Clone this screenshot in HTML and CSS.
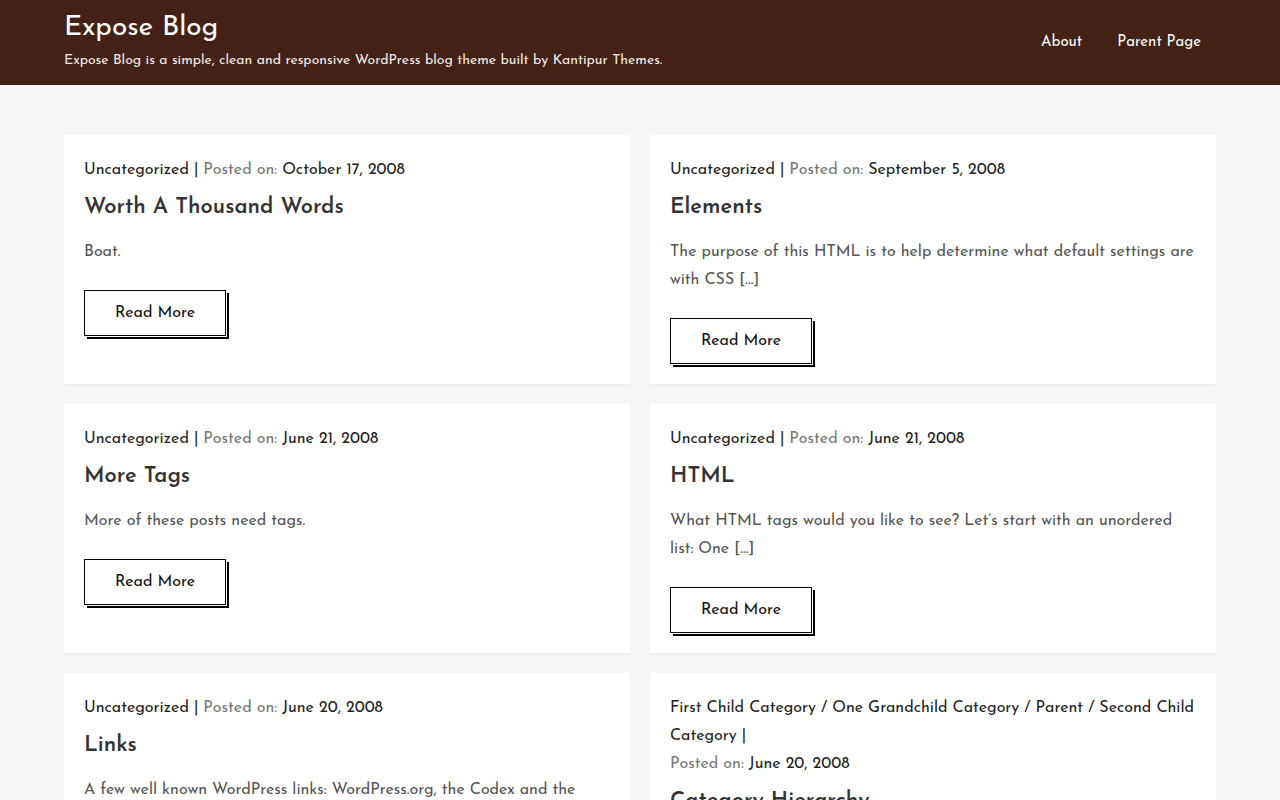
FILE: index.html
```html
<!DOCTYPE html>
<html lang="en">
<head>
  <meta charset="UTF-8">
  <title>Expose Blog</title>
  <meta name="viewport" content="width=device-width, initial-scale=1.0">
  <link rel="stylesheet" href="styles.css">
</head>
<body>
  <header class="site-header">
    <div class="container header-inner">
      <div class="branding">
        <a class="site-title" href="#">Expose Blog</a>
        <p class="site-description">Expose Blog is a simple, clean and responsive WordPress blog theme built by Kantipur Themes.</p>
      </div>
      <nav class="main-nav">
        <a href="#">About</a>
        <a href="#">Parent Page</a>
      </nav>
    </div>
  </header>

  <main class="container posts">
    <article class="post">
      <div class="entry-meta">
        <span class="cats"><a href="#">Uncategorized</a> |</span>
        <span class="posted">Posted on: <a href="#">October 17, 2008</a></span>
      </div>
      <h2 class="entry-title"><a href="#">Worth A Thousand Words</a></h2>
      <p class="excerpt">Boat.</p>
      <a class="read-more" href="#">Read More</a>
    </article>

    <article class="post">
      <div class="entry-meta">
        <span class="cats"><a href="#">Uncategorized</a> |</span>
        <span class="posted">Posted on: <a href="#">September 5, 2008</a></span>
      </div>
      <h2 class="entry-title"><a href="#">Elements</a></h2>
      <p class="excerpt">The purpose of this HTML is to help determine what default settings are with CSS […]</p>
      <a class="read-more" href="#">Read More</a>
    </article>

    <article class="post">
      <div class="entry-meta">
        <span class="cats"><a href="#">Uncategorized</a> |</span>
        <span class="posted">Posted on: <a href="#">June 21, 2008</a></span>
      </div>
      <h2 class="entry-title"><a href="#">More Tags</a></h2>
      <p class="excerpt">More of these posts need tags.</p>
      <a class="read-more" href="#">Read More</a>
    </article>

    <article class="post">
      <div class="entry-meta">
        <span class="cats"><a href="#">Uncategorized</a> |</span>
        <span class="posted">Posted on: <a href="#">June 21, 2008</a></span>
      </div>
      <h2 class="entry-title"><a href="#">HTML</a></h2>
      <p class="excerpt">What HTML tags would you like to see? Let’s start with an unordered list: One […]</p>
      <a class="read-more" href="#">Read More</a>
    </article>

    <article class="post">
      <div class="entry-meta">
        <span class="cats"><a href="#">Uncategorized</a> |</span>
        <span class="posted">Posted on: <a href="#">June 20, 2008</a></span>
      </div>
      <h2 class="entry-title"><a href="#">Links</a></h2>
      <p class="excerpt">A few well known WordPress links: WordPress.org, the Codex and the WordPress Planet […]</p>
      <a class="read-more" href="#">Read More</a>
    </article>

    <article class="post">
      <div class="entry-meta">
        <span class="cats"><a href="#">First Child Category</a> / <a href="#">One Grandchild Category</a> / <a href="#">Parent</a> / <a href="#">Second Child Category</a> |</span>
        <span class="posted">Posted on: <a href="#">June 20, 2008</a></span>
      </div>
      <h2 class="entry-title"><a href="#">Category Hierarchy</a></h2>
      <p class="excerpt">This post has categories nested several levels deep. […]</p>
      <a class="read-more" href="#">Read More</a>
    </article>
  </main>
</body>
</html>
```

FILE: styles.css
```css
* {
  box-sizing: border-box;
}

body {
  margin: 0;
  background: #f7f7f7;
  font-family: "Josefin Sans", Lato, sans-serif;
  font-size: 16px;
  line-height: 28px;
  color: #555;
}

a {
  color: inherit;
  text-decoration: none;
}

.container {
  width: 1152px;
  margin: 0 auto;
}

/* header */

.site-header {
  background: #432115;
  color: #fff;
  height: 85px;
}

.header-inner {
  display: flex;
  justify-content: space-between;
  align-items: flex-start;
}

.branding {
  padding-top: 11px;
}

.site-title {
  display: block;
  font-size: 28px;
  line-height: 34px;
  color: #fff;
}

.site-description {
  margin: 6px 0 0;
  font-size: 14px;
  line-height: 20px;
  color: #f3ece8;
}

.main-nav {
  display: flex;
  gap: 35px;
  padding: 29px 15px 0 0;
  font-size: 15px;
  line-height: 28px;
}

/* posts grid */

.posts {
  display: grid;
  grid-template-columns: 1fr 1fr;
  gap: 20px;
  padding: 50px 0 40px;
}

.post {
  background: #fff;
  padding: 21px 20px 20px;
  box-shadow: 0 2px 3px rgba(0,0,0,0.04);
}

.entry-meta {
  display: flex;
  flex-wrap: wrap;
  column-gap: 5px;
  color: #222;
}

.entry-meta .posted {
  color: #777;
}

.entry-meta .posted a {
  color: #222;
}

.entry-title {
  margin: 8px 0 0;
  font-size: 22px;
  line-height: 32px;
  font-weight: 600;
  color: #333;
}

.excerpt {
  margin: 14px 0 24px;
}

.read-more {
  display: block;
  width: 142px;
  height: 46px;
  line-height: 44px;
  text-align: center;
  border: 1px solid #000;
  color: #111;
  box-shadow: 1px 1px 0 #fff, 3px 3px 0 #000;
}
```
